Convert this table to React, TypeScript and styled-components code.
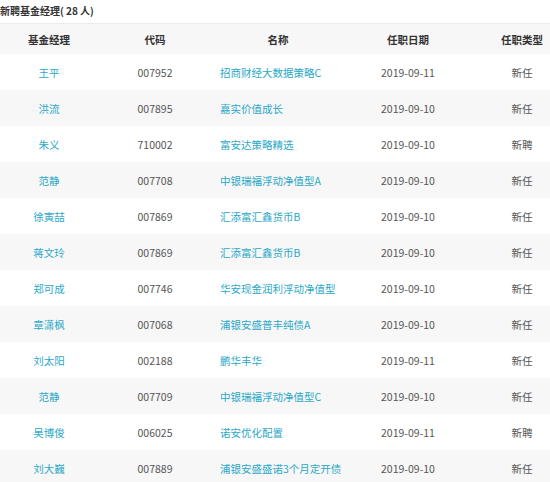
import React from "react";
import styled, { createGlobalStyle } from "styled-components";

const Global = createGlobalStyle`
  html, body { margin: 0; padding: 0; background: #fff; }
  body {
    overflow: hidden;
    font-family: "Noto Sans CJK SC", "Noto Sans", sans-serif;
  }
`;

const Page = styled.div`
  width: 572px;
  background: #fff;
`;

const Title = styled.div`
  height: 23px;
  line-height: 22px;
  font-size: 10px;
  font-weight: 700;
  color: #333;
  border-bottom: 1px solid #ececec;
  white-space: nowrap;
`;

const Row = styled.div<{ $shade?: boolean; $head?: boolean }>`
  display: grid;
  grid-template-columns: 98px 114px 132px 128px 100px;
  align-items: center;
  height: ${(p) => (p.$head ? "30px" : "36px")};
  background: ${(p) => (p.$shade ? "#f7f7f7" : "#fff")};
  font-size: 10.5px;
  font-weight: ${(p) => (p.$head ? 700 : 400)};
  color: ${(p) => (p.$head ? "#333" : "#555")};
`;

const Cell = styled.div<{ $left?: boolean; $link?: boolean }>`
  text-align: ${(p) => (p.$left ? "left" : "center")};
  padding-left: ${(p) => (p.$left ? "8px" : "0")};
  color: ${(p) => (p.$link ? "#2aa8c8" : "inherit")};
  white-space: nowrap;
`;

const data: [string, string, string, string, string][] = [
  ["王平", "007952", "招商财经大数据策略C", "2019-09-11", "新任"],
  ["洪流", "007895", "嘉实价值成长", "2019-09-10", "新任"],
  ["朱义", "710002", "富安达策略精选", "2019-09-10", "新聘"],
  ["范静", "007708", "中银瑞福浮动净值型A", "2019-09-10", "新任"],
  ["徐寅喆", "007869", "汇添富汇鑫货币B", "2019-09-10", "新任"],
  ["蒋文玲", "007869", "汇添富汇鑫货币B", "2019-09-10", "新任"],
  ["郑可成", "007746", "华安现金润利浮动净值型", "2019-09-10", "新任"],
  ["章潇枫", "007068", "浦银安盛普丰纯债A", "2019-09-10", "新任"],
  ["刘太阳", "002188", "鹏华丰华", "2019-09-11", "新任"],
  ["范静", "007709", "中银瑞福浮动净值型C", "2019-09-10", "新任"],
  ["吴博俊", "006025", "诺安优化配置", "2019-09-11", "新聘"],
  ["刘大巍", "007889", "浦银安盛盛诺3个月定开债", "2019-09-10", "新任"],
];

export default function App() {
  return (
    <Page>
      <Global />
      <Title>新聘基金经理( 28 人)</Title>
      <Row $head $shade>
        <Cell>基金经理</Cell>
        <Cell>代码</Cell>
        <Cell>名称</Cell>
        <Cell>任职日期</Cell>
        <Cell>任职类型</Cell>
      </Row>
      {data.map((d, i) => (
        <Row key={i} $shade={i % 2 === 1}>
          <Cell $link>{d[0]}</Cell>
          <Cell>{d[1]}</Cell>
          <Cell $left $link>{d[2]}</Cell>
          <Cell>{d[3]}</Cell>
          <Cell>{d[4]}</Cell>
        </Row>
      ))}
    </Page>
  );
}
